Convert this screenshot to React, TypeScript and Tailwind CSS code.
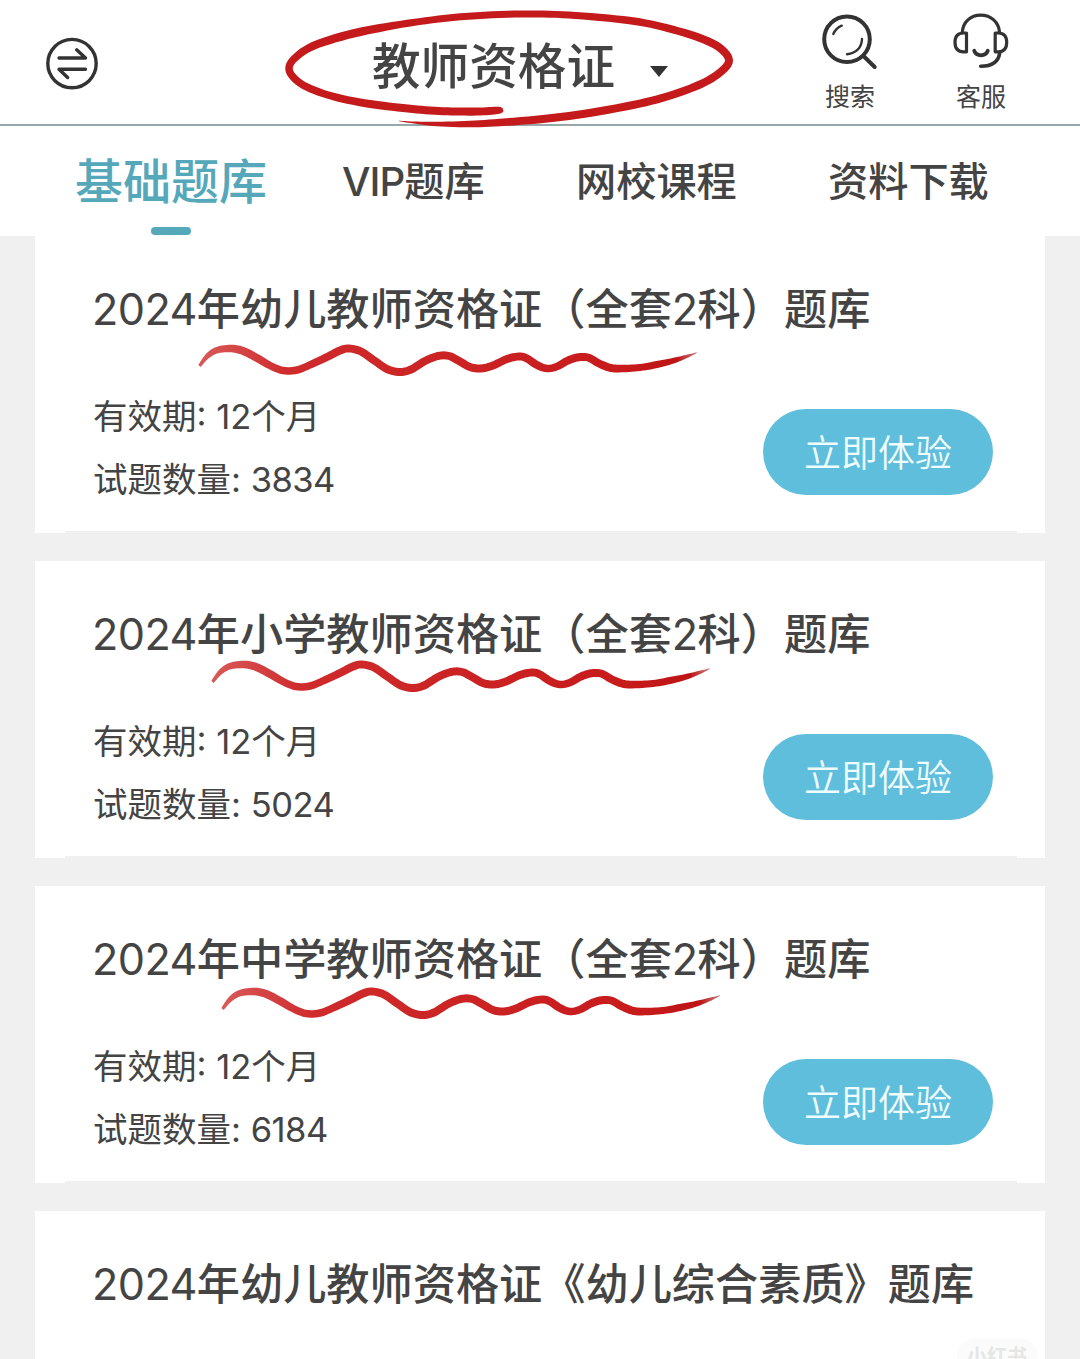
import React from 'react';

type BrushPoint = [x: number, y: number, width: number];

interface QuestionBank {
  id: number;
  title: string;
  count?: number;
  // Where the marker line starts inside the card
  mark?: string;
}

const BANKS: QuestionBank[] = [
  { id: 1, title: '2024年幼儿教师资格证（全套2科）题库', count: 3834, mark: 'left-[155px] top-[100px]' },
  { id: 2, title: '2024年小学教师资格证（全套2科）题库', count: 5024, mark: 'left-[168px] top-[91px]' },
  { id: 3, title: '2024年中学教师资格证（全套2科）题库', count: 6184, mark: 'left-[178px] top-[93px]' },
  { id: 4, title: '2024年幼儿教师资格证《幼儿综合素质》题库' },
];

const CIRCLE: BrushPoint[] = [
  [503, 109.5, 3], [501, 110, 6], [496, 110.5, 7.5], [480, 111.5, 8], [456, 111.5, 8], [430, 110.5, 8], [403, 108, 8],
  [370, 104, 8], [337, 97.5, 7.5], [310, 88.5, 7.5], [295, 79, 7.5], [289, 68.5, 7.5], [295, 58, 7.5], [313, 46, 8],
  [347, 35, 8.5], [380, 28, 8], [413, 22.5, 7], [453, 17.5, 7], [500, 14.5, 7], [543, 14, 7], [583, 16, 7],
  [633, 21, 7.5], [667, 28, 7.5], [700, 38, 8], [720, 48, 8], [729, 60.5, 8], [720, 72.5, 8], [700, 84.5, 8],
  [667, 96.5, 8], [633, 105, 8], [583, 114, 8], [543, 119, 8], [500, 122.5, 7.5], [470, 124, 6.5], [437, 124, 4.5],
  [414, 122.5, 2], [399, 121, 0.5],
];

const WAVE: BrushPoint[] = [
  [199.5, 366, 3], [207, 356.5, 5], [216, 350.5, 6.5], [229, 348.5, 7.5], [242, 350.5, 8], [257, 358, 8],
  [270, 365.5, 7.5], [283, 370.5, 7.5], [297, 370, 7.5], [312, 364, 7.5], [328, 356.5, 8], [340, 350.5, 8],
  [349, 348.5, 8], [361, 351.5, 8], [375, 361, 8], [388, 369.5, 8], [400, 372, 8], [411, 369.5, 8], [425, 361, 8],
  [438, 356, 8], [449, 356, 8], [460, 361.5, 8], [470, 367, 8], [481, 368.5, 8], [493, 365.5, 8],
  [507, 359, 8], [519, 356.5, 8], [527, 358.5, 8], [537, 365, 8], [547, 368.5, 7.5], [557, 366.5, 7.5], [567, 361, 8],
  [577, 357.5, 8], [588, 357.5, 8], [599, 363.5, 8], [611, 368, 8], [624, 368.5, 7.5], [640, 367.5, 7],
  [657, 364.5, 7], [674, 360.5, 5.5], [688, 356, 3], [697, 352.5, 0.5],
];

// Outline of a brush stroke that changes width along its points
const brushPath = (points: BrushPoint[]) => {
  const samples: BrushPoint[] = [];
  for (let i = 0; i < points.length - 1; i++) {
    const p0 = points[Math.max(i - 1, 0)];
    const p1 = points[i];
    const p2 = points[i + 1];
    const p3 = points[Math.min(i + 2, points.length - 1)];
    for (let s = 0; s < 6; s++) {
      const t = s / 6;
      const at = (k: 0 | 1 | 2) =>
        0.5 *
        (2 * p1[k] +
          (p2[k] - p0[k]) * t +
          (2 * p0[k] - 5 * p1[k] + 4 * p2[k] - p3[k]) * t * t +
          (3 * p1[k] - p0[k] - 3 * p2[k] + p3[k]) * t * t * t);
      samples.push([at(0), at(1), at(2)]);
    }
  }
  samples.push(points[points.length - 1]);

  const left: string[] = [];
  const right: string[] = [];
  samples.forEach(([x, y, w], i) => {
    const a = samples[Math.max(i - 1, 0)];
    const b = samples[Math.min(i + 1, samples.length - 1)];
    const len = Math.hypot(b[0] - a[0], b[1] - a[1]) || 1;
    const nx = (-(b[1] - a[1]) / len) * (w / 2);
    const ny = ((b[0] - a[0]) / len) * (w / 2);
    left.push(`${(x + nx).toFixed(2)} ${(y + ny).toFixed(2)}`);
    right.unshift(`${(x - nx).toFixed(2)} ${(y - ny).toFixed(2)}`);
  });
  return `M${left.concat(right).join('L')}Z`;
};

const CIRCLE_PATH = brushPath(CIRCLE);
const WAVE_PATH = brushPath(WAVE);

const WaveMark = ({ id, className }: { id: number; className: string }) => (
  <svg className={`absolute pointer-events-none ${className}`} width="520" height="50" viewBox="190 336 520 50">
    <defs>
      <linearGradient id={`wave-${id}`} x1="0" x2="1" y1="0" y2="0">
        <stop offset="0" stopColor="#d95a5a" />
        <stop offset="0.18" stopColor="#cf2b2c" />
        <stop offset="0.85" stopColor="#c71a1b" />
        <stop offset="0.96" stopColor="#bd1416" />
        <stop offset="1" stopColor="#c98080" />
      </linearGradient>
    </defs>
    <path d={WAVE_PATH} fill={`url(#wave-${id})`} />
  </svg>
);

const SwapIcon = () => (
  <svg width="54" height="54" viewBox="45 37 54 54" fill="none" stroke="#333" strokeWidth="3.4" strokeLinecap="round" strokeLinejoin="round">
    <circle cx="72" cy="63.6" r="24.2" />
    <path d="M59 58H85.5L76.7 49.8" />
    <path d="M85.5 69.3H59L67.6 77.5" />
  </svg>
);

const SearchIcon = () => (
  <svg width="60" height="60" viewBox="820 12 60 60" fill="none" stroke="#333" strokeLinecap="round">
    <circle cx="847" cy="39.3" r="22.8" strokeWidth="4" />
    <path d="M864 56.5L874.7 67" strokeWidth="4" />
    <path d="M833.3 34Q836 28.2 841.7 25.7" strokeWidth="2.4" />
    <path d="M862 39Q861.5 52 847 54.3" strokeWidth="2.4" />
  </svg>
);

const HeadsetIcon = () => (
  <svg width="60" height="60" viewBox="951 12 60 60" fill="none" stroke="#333" strokeWidth="3.2" strokeLinecap="round" strokeLinejoin="round">
    <path d="M962.2 32.5C963 22 970.5 15.2 980.7 15.2C991 15.2 998.7 22 999.6 32.5" />
    <path d="M966.5 33H963.5C957.5 33 955 36.5 955 42.3C955 48.2 957.5 51.8 963.5 51.8H966.5Z" />
    <path d="M995.2 33H998.2C1004.2 33 1006.7 36.5 1006.7 42.3C1006.7 48.2 1004.2 51.8 998.2 51.8H995.2Z" />
    <path d="M999.7 53C998.5 61.5 992 66.3 980.7 66.3" strokeWidth="3.6" />
    <path d="M974.2 50.8C976.5 56.8 985.5 56.8 987.8 50.8" strokeWidth="3.8" />
  </svg>
);

const Header = () => (
  <header className="relative flex h-[126px] border-b-2 border-[#97a8a8] bg-white">
    <button className="ml-[45px] mt-[37px] h-[54px]">
      <SwapIcon />
    </button>
    <button className="ml-[273px] mt-[31px] flex h-[72px] items-center">
      <span className="text-[48.6px] leading-[72px] font-medium">教师资格证</span>
      <svg className="ml-[35px] mt-[8px]" width="18" height="11" viewBox="0 0 18 11">
        <path d="M0 0H18L9 11Z" fill="#333" />
      </svg>
    </button>
    <div className="ml-auto mr-[69px] mt-[12px] flex gap-[71px]">
      <button className="flex w-[60px] flex-col items-center">
        <SearchIcon />
        <span className="mt-[7px] text-[25px] leading-[36px]">搜索</span>
      </button>
      <button className="flex w-[60px] flex-col items-center">
        <HeadsetIcon />
        <span className="mt-[7px] text-[25px] leading-[36px]">客服</span>
      </button>
    </div>
    <svg className="absolute left-0 top-0 z-10 pointer-events-none" width="760" height="134" viewBox="0 0 760 134">
      <path d={CIRCLE_PATH} fill="#c41a1c" />
    </svg>
  </header>
);

const Tabs = () => (
  <nav className="flex h-[110px] bg-white pl-[75px] text-[40.2px] leading-[60px] font-medium">
    <div className="flex w-[192px] flex-col items-center pt-[20px] text-[48px] leading-[72px] text-[#55a8ba]">
      <span>基础题库</span>
      <span className="mt-[9px] h-[8px] w-[40px] rounded-full bg-[#55a8ba]" />
    </div>
    <div className="ml-[75px] w-[143px] whitespace-nowrap pt-[26px]">
      <span className="tracking-[-1px]">VIP</span>题库
    </div>
    <div className="ml-[91px] w-[161px] whitespace-nowrap pt-[26px]">网校课程</div>
    <div className="ml-[91px] w-[161px] whitespace-nowrap pt-[26px]">资料下载</div>
  </nav>
);

// Digits are set lighter and tighter than the Chinese text around them
const BankTitle = ({ text }: { text: string }) => (
  <h2 className="ml-[-1px] whitespace-nowrap text-[43.2px] leading-[64px] font-medium">
    {text.split(/(\d+)/).map((part, i) =>
      /\d/.test(part) ? (
        <span key={i} className="font-normal tracking-[-0.6px]">{part}</span>
      ) : (
        part
      )
    )}
  </h2>
);

const BankCard = ({ bank }: { bank: QuestionBank }) => (
  <section className="relative h-[297px] shrink-0 bg-white px-[58px] pt-[41px]">
    <BankTitle text={bank.title} />
    {bank.mark && <WaveMark id={bank.id} className={bank.mark} />}
    {bank.count && (
      <div className="mt-[43px] flex justify-between">
        <div className="mt-[1px] text-[34.5px] leading-[63px]">
          <p>有效期: 12个月</p>
          <p>
            试题数量: <span className="tracking-[-0.5px]">{bank.count}</span>
          </p>
        </div>
        <button className="mr-[-6px] mt-[25px] h-[86px] w-[230px] rounded-full bg-[#5fbedc] pt-[3px] text-[37px] font-[350] text-[#effdff]">
          立即体验
        </button>
      </div>
    )}
    <div className="absolute bottom-0 left-[30px] right-[28px] h-[2px] bg-[#f0f0f0]" />
  </section>
);

export default function App() {
  return (
    <div className="relative h-[1359px] w-[1080px] overflow-hidden bg-[#f0f0f0] font-['Inter','Noto_Sans_CJK_SC',sans-serif] text-[#444]">
      <Header />
      <Tabs />
      <main className="flex flex-col gap-[28px] px-[35px]">
        {BANKS.map((bank) => (
          <BankCard key={bank.id} bank={bank} />
        ))}
      </main>
      <div className="absolute left-[957px] top-[1338px] h-[36px] w-[80px] rounded-full bg-[#fbfbfb] text-center text-[20px] leading-[38px] font-bold text-[#e6e6e6]">
        小红书
      </div>
    </div>
  );
}
